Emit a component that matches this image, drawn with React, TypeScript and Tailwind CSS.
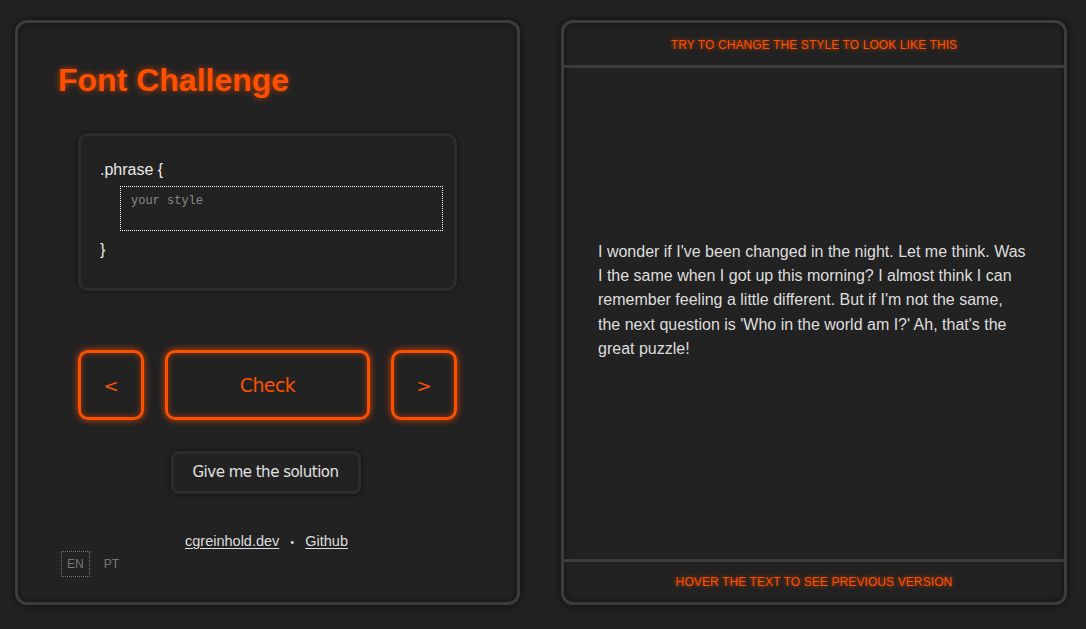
const orange = 'text-[#ff5000]'

export default function App() {
  return (
    <div className="min-h-[629px] w-[1086px] bg-[#222222] pt-[20px] pl-[15px] flex gap-[41px] font-['Liberation_Sans',Arial,sans-serif]">
      {/* Left: editor */}
      <div className="w-[505px] h-[585px] rounded-[12px] border-[3px] border-[#3c3c3c] shadow-[0_0_8px_rgba(0,0,0,0.6),inset_0_0_6px_rgba(0,0,0,0.5)] flex flex-col">
        <h1
          className={`mt-[38px] ml-[40px] text-[32px] font-bold leading-[38px] ${orange} [text-shadow:0_0_6px_rgba(255,80,0,0.7)]`}
        >
          Font Challenge
        </h1>

        <div className="mt-[34px] mx-[60px] h-[158px] rounded-[10px] border-[3px] border-[#2c2c2c] shadow-[0_0_6px_rgba(0,0,0,0.5)] pt-[24px] pl-[19px] pr-[11px]">
          <div className="text-[16px] leading-[20px] text-[#e8e8e8]">.phrase {'{'}</div>
          <div className="mt-[6px] ml-[20px] h-[45px] border border-dotted border-white px-[10px] pt-[6px] font-['Liberation_Mono','Courier_New',monospace] text-[12px] leading-[16px] text-[#8a8a8a]">
            your style
          </div>
          <div className="mt-[9px] text-[16px] leading-[20px] text-[#e8e8e8]">{'}'}</div>
        </div>

        <div className="mt-[59px] ml-[60px] flex gap-[21px] font-['DejaVu_Sans',sans-serif]">
          <button className={`w-[66px] h-[70px] rounded-[10px] border-[3px] border-[#ff5000] shadow-[0_0_7px_rgba(255,80,0,0.8),inset_0_0_6px_rgba(255,80,0,0.5)] text-[18px] ${orange}`}>
            &lt;
          </button>
          <button className={`w-[205px] h-[70px] rounded-[10px] border-[3px] border-[#ff5000] shadow-[0_0_7px_rgba(255,80,0,0.8),inset_0_0_6px_rgba(255,80,0,0.5)] text-[19px] tracking-[-0.6px] ${orange}`}>
            Check
          </button>
          <button className={`w-[66px] h-[70px] rounded-[10px] border-[3px] border-[#ff5000] shadow-[0_0_7px_rgba(255,80,0,0.8),inset_0_0_6px_rgba(255,80,0,0.5)] text-[18px] ${orange}`}>
            &gt;
          </button>
        </div>

        <div className="mt-[31px] flex justify-center pr-[4px]">
          <button className="w-[190px] h-[43px] rounded-[8px] border-[3px] border-[#2c2c2c] shadow-[0_0_6px_rgba(0,0,0,0.5)] font-['DejaVu_Sans',sans-serif] text-[15px] tracking-[-0.5px] text-[#e0e0e0]">
            Give me the solution
          </button>
        </div>

        <div className="mt-[37px] flex justify-center items-center gap-[11px] pr-[2px] text-[14.5px] text-[#dddddd]">
          <span className="underline underline-offset-2">cgreinhold.dev</span>
          <span className="text-[11px]">•</span>
          <span className="underline underline-offset-2">Github</span>
        </div>

        <div className="-mt-[2px] ml-[43px] flex items-center gap-[14px] text-[12px] text-[#777777]">
          <span className="px-[5px] py-[4px] border border-dotted border-[#777777] leading-[16px]">EN</span>
          <span className="leading-[16px]">PT</span>
        </div>
      </div>

      {/* Right: target preview */}
      <div className="w-[506px] h-[585px] rounded-[12px] border-[3px] border-[#3c3c3c] shadow-[0_0_8px_rgba(0,0,0,0.6),inset_0_0_6px_rgba(0,0,0,0.5)] flex flex-col">
        <div className={`h-[42px] pt-[2px] flex items-center justify-center text-[12px] tracking-[0.1px] ${orange} [text-shadow:0_0_4px_rgba(255,80,0,0.8)]`}>
          TRY TO CHANGE THE STYLE TO LOOK LIKE THIS
        </div>
        <div className="flex-1 border-y-[3px] border-[#3c3c3c] flex items-center pl-[34px] pr-[36px] pb-[26px]">
          <p className="text-[16px] leading-[24.3px] text-[#dedede]">
            I wonder if I've been changed in the night. Let me think. Was I the same when I got up this
            morning? I almost think I can remember feeling a little different. But if I'm not the same,
            the next question is 'Who in the world am I?' Ah, that's the great puzzle!
          </p>
        </div>
        <div className={`h-[40px] flex items-center justify-center text-[12px] tracking-[0.1px] ${orange} [text-shadow:0_0_4px_rgba(255,80,0,0.8)]`}>
          HOVER THE TEXT TO SEE PREVIOUS VERSION
        </div>
      </div>
    </div>
  )
}
